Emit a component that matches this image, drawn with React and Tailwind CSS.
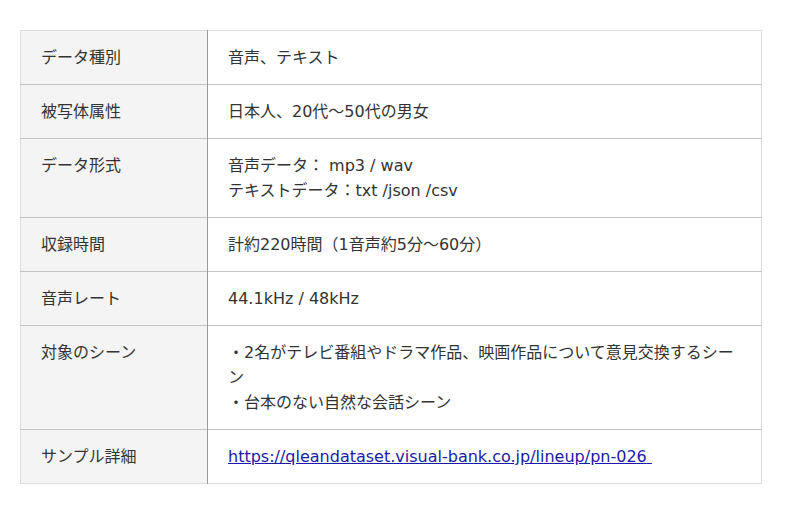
const rows = [
  { label: 'データ種別', lines: ['音声、テキスト'] },
  { label: '被写体属性', lines: ['日本人、20代〜50代の男女'] },
  { label: 'データ形式', lines: ['音声データ： mp3 / wav', 'テキストデータ：txt /json /csv'] },
  { label: '収録時間', lines: ['計約220時間（1音声約5分〜60分）'] },
  { label: '音声レート', lines: ['44.1kHz / 48kHz'] },
  {
    label: '対象のシーン',
    lines: ['・2名がテレビ番組やドラマ作品、映画作品について意見交換するシーン', '・台本のない自然な会話シーン'],
  },
  { label: 'サンプル詳細', link: 'https://qleandataset.visual-bank.co.jp/lineup/pn-026' },
]

export default function App() {
  return (
    <div
      className="h-[514px] w-[800px] bg-white pl-[20px] pt-[30px] text-[16px] leading-[25px] text-[#333]"
      style={{ fontFamily: '"DejaVu Sans", "Noto Sans CJK JP", sans-serif' }}
    >
      <table className="w-[742px] border-collapse border border-[#dcdcdc]">
        <tbody>
          {rows.map((row) => (
            <tr key={row.label} className="border-b border-[#c4c4c4] last:border-[#dcdcdc]">
              <th className="w-[187px] border-r border-[#9a9a9a] bg-[#f4f4f4] px-[20px] py-[14px] text-left align-top font-normal">
                {row.label}
              </th>
              <td className="px-[20px] py-[14px] align-top">
                {row.link ? (
                  <a href={row.link} className="text-[#1a1aa6] underline">
                    {row.link}{'\u00a0'}
                  </a>
                ) : (
                  row.lines.map((line) => <div key={line}>{line}</div>)
                )}
              </td>
            </tr>
          ))}
        </tbody>
      </table>
    </div>
  )
}
